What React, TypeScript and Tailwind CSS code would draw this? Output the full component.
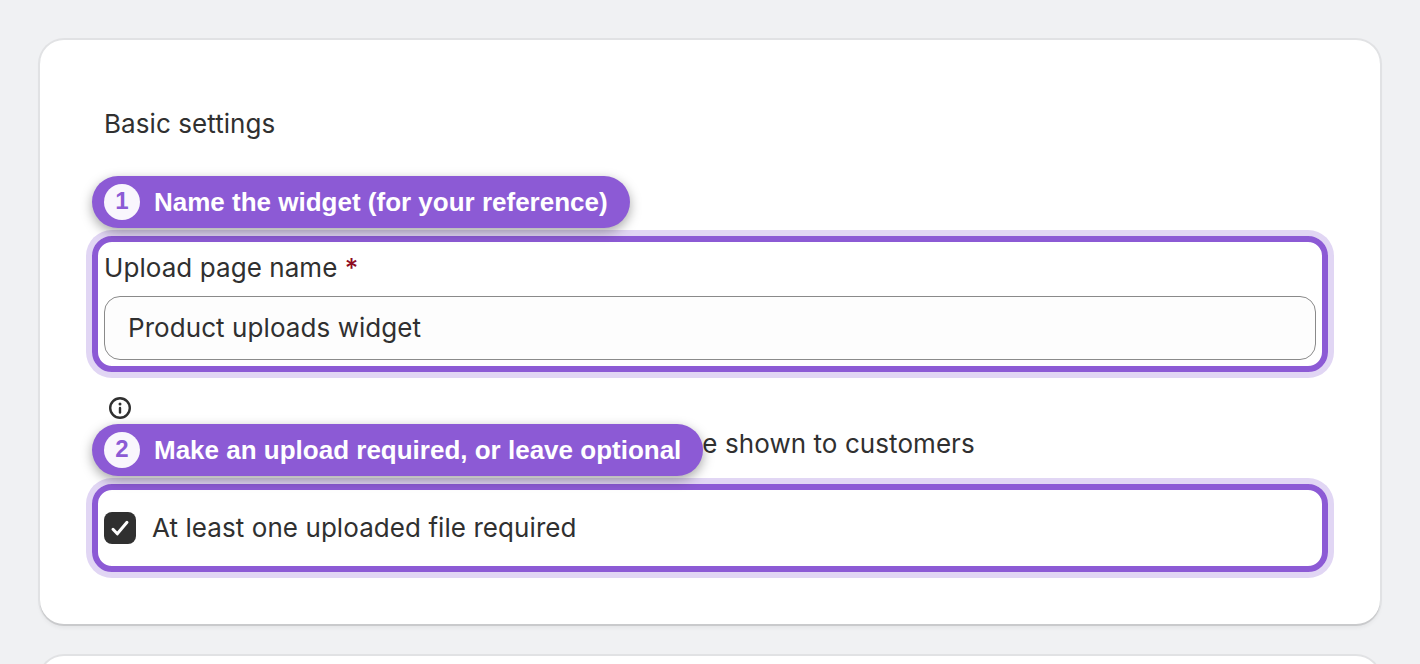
import { useState } from 'react';
import type { ReactNode } from 'react';

function StepLabel({ step, children }: { step: number; children: ReactNode }) {
    return (
        <div className="relative z-10 flex h-[52px] shrink-0 items-center rounded-full bg-[#8c5ad5] pl-3 pr-[22px] font-['Liberation_Sans',sans-serif] text-[26px] font-bold leading-[30px] tracking-normal text-white shadow-[0_4px_12px_rgba(0,0,0,0.35)]">
            <span className="mr-3.5 flex size-9 items-center justify-center rounded-full bg-[#f9f6fd] pb-0.5 text-2xl leading-none text-[#8c5ad5]">
                {step}
            </span>
            <span className="whitespace-nowrap">{children}</span>
        </div>
    );
}

function InfoIcon() {
    return (
        <svg className="ml-[5px] size-[22px]" viewBox="0 0 22 22" fill="none">
            <circle cx="11" cy="11" r="9.8" stroke="#303030" strokeWidth="2.4" />
            <circle cx="11" cy="7.1" r="1.5" fill="#303030" />
            <path d="M11 11v4.5" stroke="#303030" strokeWidth="2.4" strokeLinecap="round" />
        </svg>
    );
}

export default function App() {
    const [name, setName] = useState('Product uploads widget');
    const [required, setRequired] = useState(true);

    return (
        <div className="h-[664px] overflow-hidden bg-[#f0f1f3] px-10 pt-10 font-['Inter',sans-serif] text-[26px] leading-10 tracking-[0.07px] text-[#303030]">
            {/* Basic settings */}
            <section className="h-[584px] rounded-3xl bg-white px-[52px] pt-16 shadow-[0_2px_0_0_#c9cacc,0_0_0_2px_#e1e2e4,0_4px_4px_rgba(0,0,0,0.05)]">
                <h2 className="ml-3">Basic settings</h2>

                <div className="mt-8 flex">
                    <StepLabel step={1}>Name the widget (for your reference)</StepLabel>
                </div>
                <div className="mt-2 h-[136px] rounded-[20px] border-[6px] border-[#8c5ad5] px-1.5 pt-1.5 shadow-[0_0_0_6px_#e1d6f4]">
                    <label htmlFor="name" className="block">
                        Upload page name <span className="font-medium text-[#8e0b21]">*</span>
                    </label>
                    <input
                        id="name"
                        value={name}
                        onChange={(e) => setName(e.target.value)}
                        className="mt-2 block h-16 w-full rounded-2xl border border-[#8a8a8a] bg-[#fdfdfd] px-[23px] pb-0.5 outline-none"
                    />
                </div>

                <div className="ml-3 mt-[25px]">
                    <InfoIcon />
                </div>
                <div className="mt-[5px] flex h-[52px] items-start">
                    <StepLabel step={2}>Make an upload required, or leave optional</StepLabel>
                    <p className="-ml-px">e shown to customers</p>
                </div>
                <div className="mt-2 flex h-[88px] items-center rounded-[20px] border-[6px] border-[#8c5ad5] px-1.5 shadow-[0_0_0_6px_#e1d6f4]">
                    <button
                        role="checkbox"
                        aria-checked={required}
                        onClick={() => setRequired(!required)}
                        className="flex size-8 items-center justify-center rounded-lg bg-[#303030]"
                    >
                        {required && (
                            <svg className="size-8" viewBox="0 0 32 32" fill="none">
                                <path d="M9 17.3l4.3 4.5L23 10.3" stroke="white" strokeWidth="3" strokeLinecap="round" strokeLinejoin="round" />
                            </svg>
                        )}
                    </button>
                    <span className="ml-4">At least one uploaded file required</span>
                </div>
            </section>

            {/* Next card */}
            <section className="mt-8 h-40 rounded-3xl bg-white shadow-[0_0_0_2px_#e1e2e4]" />
        </div>
    );
}
